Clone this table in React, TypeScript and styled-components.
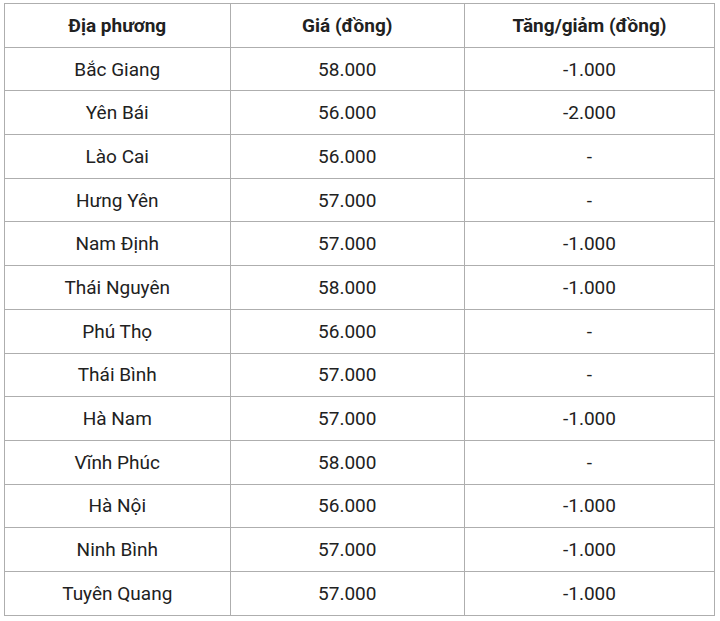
import React from 'react';
import styled, { createGlobalStyle } from 'styled-components';

const GlobalStyle = createGlobalStyle`
  html, body {
    margin: 0;
    padding: 0;
    background: #ffffff;
  }
  body {
    font-family: Roboto, 'Liberation Sans', Arial, sans-serif;
  }
`;

const Page = styled.div`
  width: 720px;
  height: 621px;
  padding: 3px 0 0 4px;
  box-sizing: border-box;
  background: #fff;
`;

const Table = styled.table`
  width: 710px;
  border-collapse: collapse;
  table-layout: fixed;
  color: #212121;
  font-size: 19px;
`;

const Cell = styled.td<{ $bold?: boolean }>`
  height: 43.7px;
  padding: 0;
  box-sizing: border-box;
  border: 1.5px solid #aeaeae;
  text-align: center;
  vertical-align: middle;
  font-weight: ${p => (p.$bold ? 700 : 400)};
  white-space: nowrap;
`;

const rows: [string, string, string][] = [
  ['Bắc Giang', '58.000', '-1.000'],
  ['Yên Bái', '56.000', '-2.000'],
  ['Lào Cai', '56.000', '-'],
  ['Hưng Yên', '57.000', '-'],
  ['Nam Định', '57.000', '-1.000'],
  ['Thái Nguyên', '58.000', '-1.000'],
  ['Phú Thọ', '56.000', '-'],
  ['Thái Bình', '57.000', '-'],
  ['Hà Nam', '57.000', '-1.000'],
  ['Vĩnh Phúc', '58.000', '-'],
  ['Hà Nội', '56.000', '-1.000'],
  ['Ninh Bình', '57.000', '-1.000'],
  ['Tuyên Quang', '57.000', '-1.000'],
];

export default function App() {
  return (
    <>
      <GlobalStyle />
      <Page>
        <Table>
          <colgroup>
            <col style={{ width: 225.5 }} />
            <col style={{ width: 234.5 }} />
            <col style={{ width: 250 }} />
          </colgroup>
          <thead>
            <tr>
              <Cell as="th" $bold>Địa phương</Cell>
              <Cell as="th" $bold>Giá (đồng)</Cell>
              <Cell as="th" $bold>Tăng/giảm (đồng)</Cell>
            </tr>
          </thead>
          <tbody>
            {rows.map(([place, price, change]) => (
              <tr key={place}>
                <Cell>{place}</Cell>
                <Cell>{price}</Cell>
                <Cell>{change}</Cell>
              </tr>
            ))}
          </tbody>
        </Table>
      </Page>
    </>
  );
}
